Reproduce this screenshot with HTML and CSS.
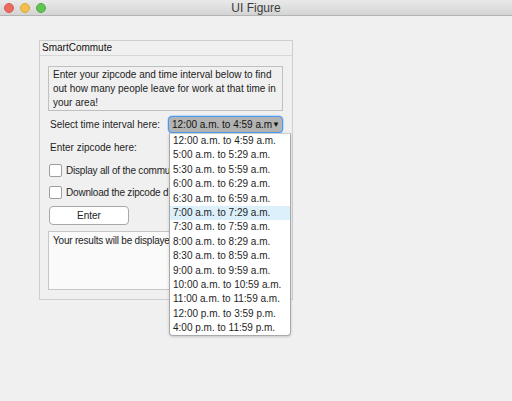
FILE: index.html
```html
<!DOCTYPE html>
<html>
<head>
<meta charset="utf-8">
<link rel="stylesheet" href="styles.css">
</head>
<body>
<div class="titlebar">
  <div class="lights">
    <span class="light red"></span>
    <span class="light yellow"></span>
    <span class="light green"></span>
  </div>
  <div class="title">UI Figure</div>
</div>
<div class="content">
  <div class="panel">
    <div class="panel-head">SmartCommute</div>
    <div class="panel-body">
      <div class="info">Enter your zipcode and time interval below to find out how many people leave for work at that time in your area!</div>
      <div class="row select-row">
        <span class="label">Select time interval here:</span>
        <div class="dropdown"><span>12:00 a.m. to 4:59 a.m</span><span class="caret">▼</span></div>
      </div>
      <div class="row zip-row">
        <span class="label">Enter zipcode here:</span>
      </div>
      <label class="check-row"><span class="box"></span><span class="ctext">Display all of the commu</span></label>
      <label class="check-row second"><span class="box"></span><span class="ctext">Download the zipcode d</span></label>
      <button class="btn">Enter</button>
      <div class="results"><span class="rtext">Your results will be displaye</span></div>
    </div>
    <ul class="menu">
      <li>12:00 a.m. to 4:59 a.m.</li>
      <li>5:00 a.m. to 5:29 a.m.</li>
      <li>5:30 a.m. to 5:59 a.m.</li>
      <li>6:00 a.m. to 6:29 a.m.</li>
      <li>6:30 a.m. to 6:59 a.m.</li>
      <li class="hover">7:00 a.m. to 7:29 a.m.</li>
      <li>7:30 a.m. to 7:59 a.m.</li>
      <li>8:00 a.m. to 8:29 a.m.</li>
      <li>8:30 a.m. to 8:59 a.m.</li>
      <li>9:00 a.m. to 9:59 a.m.</li>
      <li>10:00 a.m. to 10:59 a.m.</li>
      <li>11:00 a.m. to 11:59 a.m.</li>
      <li>12:00 p.m. to 3:59 p.m.</li>
      <li>4:00 p.m. to 11:59 p.m.</li>
    </ul>
  </div>
</div>
</body>
</html>
```
FILE: styles.css
```css
* { box-sizing: border-box; }
html, body { margin: 0; padding: 0; }
body {
  width: 512px;
  height: 401px;
  background: #f0f0f0;
  font-family: "Liberation Sans", Arial, sans-serif;
  font-size: 10px;
  color: #1a1a1a;
  overflow: hidden;
}
.titlebar {
  height: 16px;
  background: linear-gradient(#e9e9e9, #d4d4d4);
  border-bottom: 1px solid #b4b4b4;
  display: flex;
  align-items: center;
}
.lights { display: flex; gap: 6px; padding-left: 4px; }
.light { width: 10px; height: 10px; border-radius: 50%; display: block; }
.red { background: #ed6a5e; border: 0.5px solid #d35a4f; }
.yellow { background: #f5bf4f; border: 0.5px solid #d9a53f; }
.green { background: #61c554; border: 0.5px solid #4ea943; }
.title {
  flex: 1;
  text-align: center;
  margin-left: -46px;
  color: #3c3c3c;
  font-size: 12px;
}
.content { padding: 24px 0 0 39px; }
.panel {
  position: relative;
  width: 254px;
  height: 260px;
  border: 1px solid #cfcfcf;
  background: #f0f0f0;
}
.panel-head {
  height: 15px;
  line-height: 14px;
  padding-left: 2px;
  border-bottom: 1px solid #d6d6d6;
  color: #111;
}
.panel-body {
  padding: 10px 9px 0 8px;
  display: flex;
  flex-direction: column;
}
.info {
  height: 45px;
  border: 1px solid #c0c0c0;
  padding: 1px 4px 0 4px;
  line-height: 14px;
  color: #222;
  width: 235px;
}
.row { display: flex; align-items: center; white-space: nowrap; }
.label { width: 121px; padding-left: 2px; color: #1e1e1e; }
.select-row { margin-top: 5px; height: 17px; }
.dropdown {
  width: 115px;
  height: 17px;
  border: 1px solid #4a9bf0;
  border-radius: 4px;
  background: #b3b3b3;
  display: flex;
  align-items: center;
  justify-content: space-between;
  padding: 0 3px 0 3px;
  color: #111;
  box-shadow: 0 0 0 0.5px #8ec1f5;
  white-space: nowrap;
}
.caret { font-size: 8px; }
.zip-row { margin-top: 4px; height: 21px; }
.check-row {
  display: flex;
  align-items: center;
  gap: 4px;
  margin-top: 5px;
  height: 14px;
  padding-left: 1px;
  white-space: nowrap;
  color: #1e1e1e;
}
.ctext { letter-spacing: -0.2px; }
.check-row.second { margin-top: 8px; }
.box {
  width: 13px;
  height: 13px;
  background: #fff;
  border: 1px solid #9d9d9d;
  border-radius: 2px;
  display: block;
  flex: none;
}
.btn {
  margin-top: 7px;
  margin-left: 1px;
  width: 80px;
  height: 19px;
  background: #fff;
  border: 1px solid #a8a8a8;
  border-radius: 4px;
  font-family: inherit;
  font-size: 10px;
  color: #222;
  padding: 0;
}
.results {
  margin-top: 6px;
  height: 59px;
  width: 235px;
  background: #fafafa;
  border: 1px solid #c6c6c6;
  padding: 2px 4px;
  line-height: 14px;
  color: #222;
  white-space: nowrap;
}
.rtext { letter-spacing: -0.2px; }
.menu {
  position: absolute;
  left: 129px;
  top: 92px;
  width: 122px;
  margin: 0;
  padding: 0;
  list-style: none;
  background: #fff;
  border: 1px solid #a9a9a9;
  border-top-color: #d0d0d0;
  border-radius: 0 0 4px 4px;
  box-shadow: 0 1px 3px rgba(0,0,0,0.18);
}
.menu li {
  height: 14.4px;
  line-height: 14.4px;
  padding-left: 3px;
  color: #1e1e1e;
  white-space: nowrap;
}
.menu li.hover { background: #dcf0fb; }
```
